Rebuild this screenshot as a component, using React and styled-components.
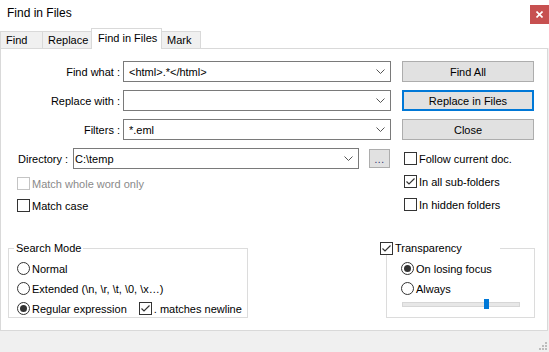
import React from 'react'
import styled, { createGlobalStyle } from 'styled-components'

const GlobalStyle = createGlobalStyle`
  html, body {
    margin: 0;
    padding: 0;
    background: #f0f0f0;
  }
  body {
    font-family: "Liberation Sans", Arial, sans-serif;
    font-size: 11px;
    color: #000;
  }
`;

const Window = styled.div`
  width: 549px;
  height: 352px;
  display: flex;
  flex-direction: column;
  background: #f0f0f0;
  overflow: hidden;
`;

const TitleBar = styled.div`
  height: 28px;
  flex-shrink: 0;
  background: #fff;
  display: flex;
  justify-content: space-between;
  align-items: flex-start;
`;

const Caption = styled.div`
  margin: 6px 0 0 7px;
  font-size: 12px;
  line-height: 14px;
`;

const CloseBox = styled.div`
  margin-top: 5px;
  width: 19px;
  height: 19px;
  background: #c75050;
  display: flex;
  align-items: center;
  justify-content: center;
`;

const TabStrip = styled.div`
  height: 20px;
  flex-shrink: 0;
  background: #fff;
  display: flex;
  align-items: flex-end;
`;

const Tab = styled.div`
  position: relative;
  z-index: ${p => (p.$active ? 1 : 0)};
  box-sizing: border-box;
  width: ${p => p.$width}px;
  height: ${p => (p.$active ? 21 : 17)}px;
  margin-bottom: ${p => (p.$active ? -1 : 0)}px;
  margin-left: ${p => (p.$first ? 0 : -1)}px;
  padding: ${p => (p.$active ? '3px 0 0 6px' : '2px 0 0 5px')};
  background: ${p => (p.$active ? '#fff' : '#f0f0f0')};
  border: 1px solid #d9d9d9;
  border-bottom: none;
  line-height: 13px;
  white-space: nowrap;
`;

const Panel = styled.div`
  box-sizing: border-box;
  width: 548px;
  height: 283px;
  flex-shrink: 0;
  background: #fff;
  border: 1px solid #d9d9d9;
  display: flex;
  flex-direction: column;
`;

const TopArea = styled.div`
  display: flex;
  gap: 11px;
  padding-top: 12px;
`;

const LeftColumn = styled.div`
  width: 390px;
  display: flex;
  flex-direction: column;
`;

const FieldRow = styled.div`
  display: grid;
  grid-template-columns: 119px 268px;
  column-gap: 3px;
  align-items: center;
  height: 21px;
  margin-bottom: 8px;
`;

const FieldLabel = styled.div`
  text-align: ${p => (p.$left ? 'left' : 'right')};
  width: ${p => (p.$width ? `${p.$width}px` : 'auto')};
  white-space: nowrap;
`;

const DirRow = styled.div`
  display: flex;
  align-items: center;
  height: 21px;
  padding-left: 17px;
`;

const Combo = styled.div`
  box-sizing: border-box;
  width: ${p => p.$width}px;
  height: 21px;
  border: 1px solid #7a7a7a;
  background: #fff;
  display: flex;
  align-items: center;
  padding: 0 5px 0 ${p => p.$inset}px;
`;

const ComboText = styled.span`
  flex: 1;
  white-space: nowrap;
  overflow: hidden;
`;

const BrowseButton = styled.div`
  box-sizing: border-box;
  width: 21px;
  height: 19px;
  margin-left: 10px;
  background: #e1e1e1;
  border: 1px solid #adadad;
  color: #1c2a6b;
  font-size: 10px;
  display: flex;
  align-items: center;
  justify-content: center;
  letter-spacing: 0.5px;
  padding-top: 2px;
`;

const CheckStack = styled.div`
  display: flex;
  flex-direction: column;
  gap: ${p => p.$gap}px;
  margin-top: ${p => p.$top}px;
  padding-left: ${p => p.$indent}px;
`;

const CheckRow = styled.div`
  display: flex;
  align-items: center;
  gap: 2px;
  height: 13px;
  color: ${p => (p.$disabled ? '#8a8a8a' : '#000')};
  white-space: nowrap;
  margin-left: ${p => p.$offset || 0}px;
`;

const Box = styled.div`
  box-sizing: border-box;
  width: 13px;
  height: 13px;
  flex-shrink: 0;
  background: #fff;
  border: 1px solid ${p => (p.$disabled ? '#c4c4c4' : '#333')};
  display: flex;
  align-items: center;
  justify-content: center;
`;

const RadioCircle = styled.div`
  box-sizing: border-box;
  width: 13px;
  height: 13px;
  flex-shrink: 0;
  border-radius: 50%;
  background: #fff;
  border: 1px solid #333;
  display: flex;
  align-items: center;
  justify-content: center;

  &::after {
    content: '';
    display: ${p => (p.$on ? 'block' : 'none')};
    width: 7px;
    height: 7px;
    border-radius: 50%;
    background: #333;
  }
`;

const RightColumn = styled.div`
  width: 132px;
  display: flex;
  flex-direction: column;
  gap: 8px;
`;

const PushButton = styled.div`
  box-sizing: border-box;
  height: 21px;
  background: #e1e1e1;
  border: 1px solid ${p => (p.$focused ? '#0078d7' : '#adadad')};
  box-shadow: ${p => (p.$focused ? 'inset 0 0 0 1px #0078d7' : 'none')};
  display: flex;
  align-items: center;
  justify-content: center;
  white-space: nowrap;
`;

const BottomArea = styled.div`
  display: flex;
  justify-content: space-between;
  margin-top: 29px;
  padding: 0 12px 0 7px;
`;

const Group = styled.fieldset`
  box-sizing: border-box;
  width: ${p => p.$width}px;
  height: 77px;
  margin: 0;
  padding: 0;
  min-width: 0;
  border: 1px solid #dcdcdc;
`;

const Legend = styled.legend`
  box-sizing: border-box;
  margin-left: ${p => p.$shift}px;
  padding: ${p => (p.$width ? '0' : '0 2px')};
  width: ${p => (p.$width ? `${p.$width}px` : 'auto')};
  line-height: 14px;
  height: 14px;
  display: flex;
  align-items: center;
`;

const GroupBody = styled.div`
  display: flex;
  flex-direction: column;
  gap: 7px;
  padding: 7px 0 0 ${p => p.$indent}px;
`;

const InlineRow = styled.div`
  display: flex;
  align-items: center;
`;

const SliderTrack = styled.div`
  position: relative;
  width: 118px;
  height: 10px;
  margin: -3px 0 0 1px;
  display: flex;
  align-items: center;
`;

const SliderRail = styled.div`
  box-sizing: border-box;
  width: 100%;
  height: 5px;
  background: #e7e7e7;
  border: 1px solid #d6d6d6;
`;

const SliderThumb = styled.div`
  position: absolute;
  top: 0;
  width: 5px;
  height: 10px;
  background: #0078d7;
`;

const BottomStrip = styled.div`
  flex: 1;
  display: flex;
  justify-content: flex-end;
  align-items: flex-end;
  padding: 0 1px 1px 0;
`;

const Chevron = () => (
  <svg width="9" height="5" viewBox="0 0 9 5">
    <path d="M0.5 0.5 L4.5 4.5 L8.5 0.5" fill="none" stroke="#555" strokeWidth="1" />
  </svg>
);

const Tick = ({ disabled }) => (
  <svg width="11" height="11" viewBox="0 0 11 11">
    <path d="M1.5 5.5 L4 8 L9.5 2.5" fill="none" stroke={disabled ? '#bbb' : '#333'} strokeWidth="1.2" />
  </svg>
);

const Check = ({ label, checked, disabled, offset }) => (
  <CheckRow $disabled={disabled} $offset={offset}>
    <Box $disabled={disabled}>{checked && <Tick disabled={disabled} />}</Box>
    <span>{label}</span>
  </CheckRow>
);

const Radio = ({ label, on }) => (
  <CheckRow>
    <RadioCircle $on={on} />
    <span>{label}</span>
  </CheckRow>
);

const Slider = ({ value }) => {
  const travel = 118 - 5;
  return (
    <SliderTrack>
      <SliderRail />
      <SliderThumb style={{ left: Math.round(value * travel) }} />
    </SliderTrack>
  );
};

const tabs = [
  { label: 'Find', width: 43 },
  { label: 'Replace', width: 50 },
  { label: 'Find in Files', width: 71, active: true },
  { label: 'Mark', width: 40 },
];

const fields = [
  { label: 'Find what :', value: '<html>.*</html>' },
  { label: 'Replace with :', value: '' },
  { label: 'Filters :', value: '*.eml' },
];

export default function App() {
  return (
    <Window>
      <GlobalStyle />
      <TitleBar>
        <Caption>Find in Files</Caption>
        <CloseBox>
          <svg width="7" height="7" viewBox="0 0 7 7">
            <path d="M0.5 0.5 L6.5 6.5 M6.5 0.5 L0.5 6.5" stroke="#fff" strokeWidth="1.6" />
          </svg>
        </CloseBox>
      </TitleBar>

      <TabStrip>
        {tabs.map((t, i) => (
          <Tab key={t.label} $width={t.width} $active={t.active} $first={i === 0}>
            {t.label}
          </Tab>
        ))}
      </TabStrip>

      <Panel>
        <TopArea>
          <LeftColumn>
            {fields.map(f => (
              <FieldRow key={f.label}>
                <FieldLabel>{f.label}</FieldLabel>
                <Combo $width={268} $inset={5}>
                  <ComboText>{f.value}</ComboText>
                  <Chevron />
                </Combo>
              </FieldRow>
            ))}
            <DirRow>
              <FieldLabel $left $width={55}>Directory :</FieldLabel>
              <Combo $width={286} $inset={1}>
                <ComboText>C:\temp</ComboText>
                <Chevron />
              </Combo>
              <BrowseButton>...</BrowseButton>
            </DirRow>
            <CheckStack $gap={9} $top={8} $indent={16}>
              <Check label="Match whole word only" disabled />
              <Check label="Match case" />
            </CheckStack>
          </LeftColumn>

          <RightColumn>
            <PushButton>Find All</PushButton>
            <PushButton $focused>Replace in Files</PushButton>
            <PushButton>Close</PushButton>
            <CheckStack $gap={10} $top={4} $indent={2}>
              <Check label="Follow current doc." />
              <Check label="In all sub-folders" checked />
              <Check label="In hidden folders" />
            </CheckStack>
          </RightColumn>
        </TopArea>

        <BottomArea>
          <Group $width={240}>
            <Legend $shift={5}>Search Mode</Legend>
            <GroupBody $indent={8}>
              <Radio label="Normal" />
              <Radio label="Extended (\n, \r, \t, \0, \x…)" />
              <InlineRow>
                <Radio label="Regular expression" on />
                <Check label=". matches newline" checked offset={12} />
              </InlineRow>
            </GroupBody>
          </Group>

          <Group $width={149}>
            <Legend $shift={-7} $width={120}>
              <Check label="Transparency" checked />
            </Legend>
            <GroupBody $indent={14}>
              <Radio label="On losing focus" on />
              <Radio label="Always" />
              <Slider value={0.73} />
            </GroupBody>
          </Group>
        </BottomArea>
      </Panel>

      <BottomStrip>
        <svg width="10" height="10" viewBox="0 0 10 10">
          <g fill="#bcbcbc">
            <rect x="7" y="1" width="2" height="2" />
            <rect x="4" y="4" width="2" height="2" />
            <rect x="7" y="4" width="2" height="2" />
            <rect x="1" y="7" width="2" height="2" />
            <rect x="4" y="7" width="2" height="2" />
            <rect x="7" y="7" width="2" height="2" />
          </g>
        </svg>
      </BottomStrip>
    </Window>
  );
}
